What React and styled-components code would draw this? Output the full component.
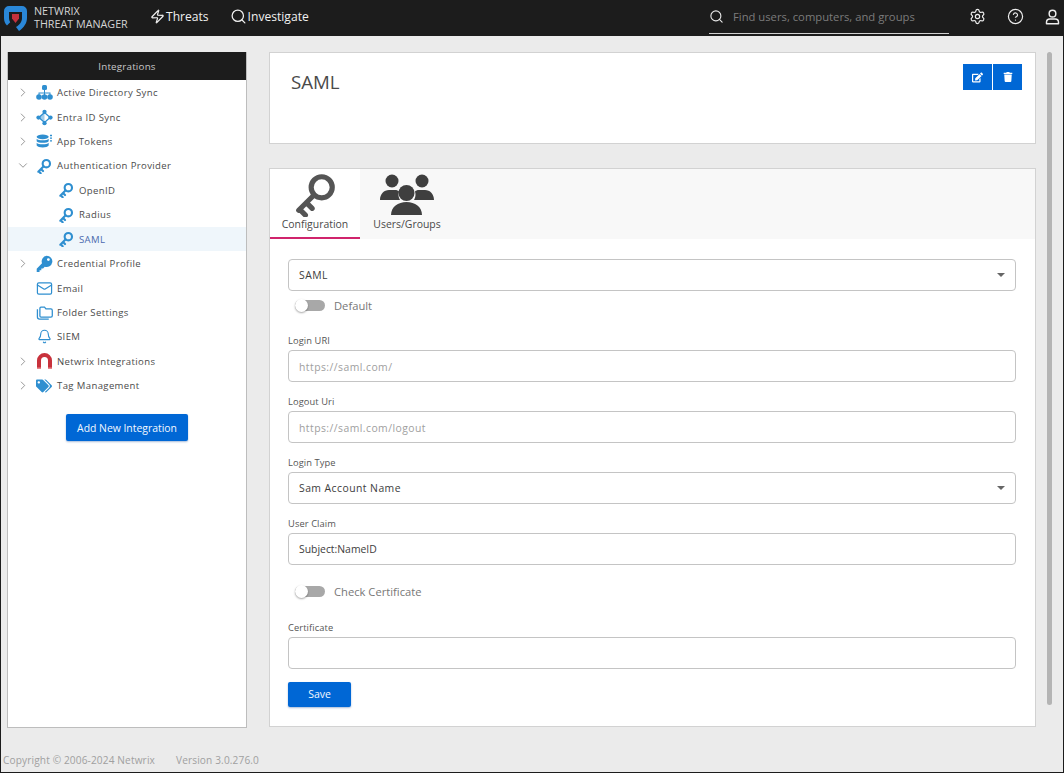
import styled, { createGlobalStyle } from 'styled-components';
import { Zap, Search, Settings, CircleHelp, Mail, Bell, ChevronRight, ChevronDown } from 'lucide-react';
import { FaTags, FaEdit, FaTrash } from 'react-icons/fa';

const GlobalStyle = createGlobalStyle`
  * { box-sizing: border-box; }
  body {
    margin: 0;
    background: #ebebeb;
    font-family: "Open Sans", "Liberation Sans", sans-serif;
  }
`;

const Page = styled.div`
  width: 1064px;
  height: 773px;
  display: flex;
  flex-direction: column;
  border: 1px solid #1c1c1c;
  border-top: 0;
  overflow: hidden;
`;

const Header = styled.header`
  height: 36px;
  flex: none;
  background: #1c1c1c;
  color: #f0f0f0;
  display: flex;
  align-items: center;
  padding: 0 0 3px 3px;
`;

const Brand = styled.div`
  display: flex;
  align-items: center;
  gap: 7px;
  width: 146px;
  font-size: 10.75px;
  line-height: 13.5px;
  color: #d4d4d4;
  margin-top: 3px;
`;

const NavItem = styled.div`
  display: flex;
  align-items: center;
  gap: 1px;
  font-size: 12.1px;
  margin-right: ${p => p.$gap}px;
`;

const SearchBox = styled.div`
  margin-left: auto;
  width: 240px;
  height: 26px;
  margin-top: 9px;
  display: flex;
  align-items: center;
  gap: 9px;
  padding-bottom: 9px;
  border-bottom: 1px solid #d0d0d0;
  color: #e8e8e8;
`;

const SearchText = styled.span`
  font-size: 11.25px;
  color: #7b7b7b;
`;

const HeaderIcons = styled.div`
  display: flex;
  align-items: center;
  gap: 21px;
  margin-left: 20px;
  margin-right: 3px;
  color: #ededed;
`;

const Body = styled.div`
  flex: 1;
  min-height: 0;
  display: flex;
  align-items: flex-start;
  padding: 16px 0 0 6px;
`;

const Sidebar = styled.aside`
  width: 240px;
  height: 676px;
  flex: none;
  background: #fff;
  border: 1px solid #bdbdbd;
  border-top: 0;
  margin-right: 22px;
`;

const SidebarTitle = styled.div`
  height: 28px;
  background: #1c1c1c;
  color: #c9c9c9;
  font-size: 9.8px;
  letter-spacing: 0.2px;
  display: flex;
  align-items: center;
  justify-content: center;
`;

const TreeList = styled.div`
  padding-top: 0.4px;
`;

const TreeRow = styled.div`
  height: 24.45px;
  display: flex;
  align-items: center;
  padding-left: ${p => (p.$child ? 49 : 8)}px;
  background: ${p => (p.$active ? '#eff6fb' : 'transparent')};
  color: ${p => (p.$active ? '#4a69ad' : '#4b4b4b')};
  font-size: 9.55px;
  letter-spacing: 0.38px;
`;

const Caret = styled.span`
  width: 14px;
  height: 16px;
  margin-right: 5px;
  display: flex;
  align-items: center;
  justify-content: center;
  color: #777;
  flex: none;
`;

const TreeIcon = styled.span`
  width: 18px;
  height: 18px;
  margin-right: 4px;
  flex: none;
  display: flex;
  align-items: center;
  justify-content: center;
  color: ${p => p.$color || '#2f8fd0'};
`;

const AddWrap = styled.div`
  display: flex;
  justify-content: center;
  padding-top: 16px;
`;

const PrimaryButton = styled.button`
  border: 0;
  border-radius: 2px;
  background: #0067d5;
  color: #f4f8ff;
  font-family: inherit;
  font-size: ${p => p.$size || 10.4}px;
  height: ${p => p.$h}px;
  width: ${p => p.$w}px;
  padding: 0;
  box-shadow: 0 1px 2px rgba(0, 60, 140, 0.35);
`;

const Main = styled.main`
  width: 767px;
  flex: none;
  display: flex;
  flex-direction: column;
  gap: 24px;
`;

const TitleCard = styled.section`
  height: 92px;
  background: #fff;
  border: 1px solid #d2d2d2;
  display: flex;
  justify-content: space-between;
  padding: 11px 13px 0 21px;
`;

const PageTitle = styled.h1`
  margin: 5px 0 0;
  font-size: 18.7px;
  font-weight: 400;
  color: #4a4a4a;
`;

const ActionGroup = styled.div`
  display: flex;
  gap: 1px;
  height: 26px;
`;

const ActionButton = styled.button`
  width: 29px;
  height: 26px;
  border: 0;
  padding: 0;
  background: #0067d5;
  color: #fff;
  display: flex;
  align-items: center;
  justify-content: center;
`;

const FormCard = styled.section`
  height: 559px;
  background: #fff;
  border: 1px solid #d2d2d2;
`;

const TabBar = styled.div`
  height: 70px;
  display: flex;
  background: #f8f8f8;
`;

const Tab = styled.div`
  width: ${p => p.$w}px;
  height: 70px;
  display: flex;
  flex-direction: column;
  align-items: center;
  justify-content: flex-end;
  padding-bottom: ${p => (p.$active ? 6 : 8)}px;
  background: ${p => (p.$active ? '#fff' : 'transparent')};
  border-bottom: ${p => (p.$active ? '2px solid #d0246c' : '0')};
  color: #4a4a4a;
  font-size: 10.45px;
`;

const TabIcon = styled.span`
  display: flex;
  margin-bottom: ${p => p.$gap}px;
  color: #555;
`;

const Form = styled.div`
  padding: 20px 19px 0 18px;
  display: flex;
  flex-direction: column;
`;

const FieldLabel = styled.label`
  display: block;
  font-size: 9.3px;
  letter-spacing: 0.1px;
  line-height: 12px;
  color: #555;
  margin-top: ${p => p.$top}px;
  margin-bottom: 3px;
`;

const Control = styled.div`
  height: 32px;
  border: 1px solid #c4c4c4;
  border-radius: 4px;
  background: #fff;
  display: flex;
  align-items: center;
  justify-content: space-between;
  padding: ${p => (p.$placeholder ? '1px' : '0')} 10px 0;
  font-size: 10.4px;
  letter-spacing: ${p => (p.$tight ? 0 : 0.45)}px;
  color: ${p => (p.$placeholder ? '#a0a0a0' : '#3d3d3d')};
`;

const SelectArrow = styled.span`
  width: 0;
  height: 0;
  border-left: 4px solid transparent;
  border-right: 4px solid transparent;
  border-top: 4px solid #666;
`;

const ToggleRow = styled.div`
  display: flex;
  align-items: center;
  height: 20px;
  margin-top: ${p => p.$top}px;
  padding-left: 7px;
  font-size: 11.2px;
  color: #777;
`;

const Toggle = styled.span`
  position: relative;
  width: 30px;
  height: 11px;
  border-radius: 6px;
  margin-right: 9px;
  background: #a8a8a8;
  &::after {
    content: '';
    position: absolute;
    left: 0;
    top: -1px;
    width: 13px;
    height: 13px;
    border-radius: 50%;
    background: #fff;
    box-shadow: 0 1px 2px rgba(0, 0, 0, 0.35);
  }
`;

const SaveWrap = styled.div`
  margin-top: 12px;
`;

const Scrollbar = styled.div`
  width: 5px;
  height: 653px;
  flex: none;
  margin-left: 11px;
  border-radius: 3px;
  background: #b4b4b4;
`;

const Footer = styled.footer`
  height: 36px;
  flex: none;
  display: flex;
  gap: 21px;
  align-items: flex-start;
  padding: 17px 0 0 2px;
  font-size: 10.1px;
  letter-spacing: 0.14px;
  color: #a0a0a0;
`;

const Logo = () => (
  <svg width="23" height="25" viewBox="0 0 23 25">
    <path d="M5 0h13a5 5 0 0 1 5 5v7c0 5-3 9.500-8 13l-3-4c3.500-2 6-5 6-9V6H5v6c0 1.500.4 3 1.200 4.300L3 19.500C1 17.500 0 15 0 12V5a5 5 0 0 1 5-5z" fill="#2a87d8" />
    <path d="M8 8h7v4.500l-3.500 4.500L8 12.500z" fill="#c4313d" />
  </svg>
);

const KeyIcon = ({ size = 16, weight = 3.2 }) => (
  <svg width={size} height={size} viewBox="0 0 24 24" fill="none" stroke="currentColor" strokeWidth={weight}>
    <circle cx="15.5" cy="8.500" r="5.500" />
    <path d="M11.500 12.500L3.500 20.500M4 20l3 3M7.500 16.500l3 3" strokeLinecap="round" />
  </svg>
);

const SolidKey = () => (
  <svg width="17" height="17" viewBox="0 0 24 24" fill="currentColor">
    <path d="M15 1a8 8 0 1 1-2.700 15.500L10 19H7.500v2.500H5V24H1v-4.500l7.500-7.800A8 8 0 0 1 15 1zm2.500 3.500a2 2 0 1 0 0 4 2 2 0 0 0 0-4z" />
  </svg>
);

const SitemapIcon = () => (
  <svg width="17" height="15" viewBox="0 0 17 15" fill="currentColor">
    <rect x="6" y="0" width="5" height="5" rx="1.500" />
    <path d="M8 5h1v2.500h5.500V10h-1V8.500H9V10H8V8.500H3.500V10h-1V7.500H8z" />
    <circle cx="3" cy="12" r="2.800" />
    <circle cx="8.500" cy="12" r="2.800" />
    <circle cx="14" cy="12" r="2.800" />
  </svg>
);

const DbIcon = () => (
  <svg width="16" height="15" viewBox="0 0 24 22" fill="currentColor">
    <ellipse cx="10" cy="4" rx="9" ry="3.500" />
    <path d="M1 7c2 3 16 3 18 0v3.500c-2 3-16 3-18 0zM1 13c2 3 16 3 18 0v4c-2 4-16 4-18 0z" />
    <path d="M21 2h3M21 6h3M21 10h3" stroke="currentColor" strokeWidth="2" />
  </svg>
);

const EntraIcon = () => (
  <svg width="17" height="17" viewBox="0 0 24 24" fill="none" stroke="currentColor" strokeWidth="1.800">
    <path d="M12 5L4 12l8 7 8-7z" />
    <path d="M12 5L4 12l8 7z" fill="currentColor" opacity="0.45" stroke="none" />
    <circle cx="12" cy="4" r="3" fill="currentColor" stroke="none" />
    <circle cx="12" cy="20" r="3" fill="currentColor" stroke="none" />
    <circle cx="3.500" cy="12" r="3" fill="currentColor" stroke="none" />
    <circle cx="20.500" cy="12" r="3" fill="currentColor" stroke="none" />
  </svg>
);

const FoldersIcon = () => (
  <svg width="17" height="15" viewBox="0 0 24 21" fill="none" stroke="currentColor" strokeWidth="1.800">
    <path d="M7 3h5l2 2.500h7a2 2 0 0 1 2 2V15a2 2 0 0 1-2 2H7a1.500 1.500 0 0 1-1.500-1.500V4.500A1.500 1.500 0 0 1 7 3z" />
    <path d="M2 6v11a3 3 0 0 0 3 3h13" />
  </svg>
);

const MagnetIcon = () => (
  <svg width="15" height="16" viewBox="0 0 15 16">
    <path d="M0 16V7.500a7.500 7.500 0 0 1 15 0V16h-4V7.500a3.500 3.500 0 0 0-7 0V16z" fill="#c8323c" />
    <path d="M0 16v-1.500h4V16zM11 16v-1.500h4V16z" fill="#e8848a" />
  </svg>
);

const UserIcon = () => (
  <svg width="15" height="16" viewBox="0 0 22 24" fill="none" stroke="currentColor" strokeWidth="2.200">
    <circle cx="11" cy="7" r="5" />
    <path d="M2 22v-2a5 5 0 0 1 5-5h8a5 5 0 0 1 5 5v2z" strokeLinejoin="round" />
  </svg>
);

const UsersLarge = () => (
  <svg width="54" height="42" viewBox="0 0 54 42" fill="#3f3f3f">
    <circle cx="12" cy="7" r="6.500" />
    <circle cx="42" cy="7" r="6.500" />
    <path d="M0 26c0-6 4-10 9-10h6c2 0 3 .5 4 1.500-1 3-.5 6 1 8.500z" />
    <path d="M54 26c0-6-4-10-9-10h-6c-2 0-3 .5-4 1.500 1 3 .5 6-1 8.500z" />
    <circle cx="26.500" cy="19" r="8" />
    <path d="M11 41c0-8 7-13 15.500-13S42 33 42 41z" />
  </svg>
);

const treeItems = [
  { label: 'Active Directory Sync', caret: 'right', icon: <SitemapIcon /> },
  { label: 'Entra ID Sync', caret: 'right', icon: <EntraIcon /> },
  { label: 'App Tokens', caret: 'right', icon: <DbIcon /> },
  { label: 'Authentication Provider', caret: 'down', icon: <KeyIcon /> },
  { label: 'OpenID', child: true, icon: <KeyIcon /> },
  { label: 'Radius', child: true, icon: <KeyIcon /> },
  { label: 'SAML', child: true, active: true, icon: <KeyIcon /> },
  { label: 'Credential Profile', caret: 'right', icon: <SolidKey /> },
  { label: 'Email', caret: 'none', icon: <Mail size={17} strokeWidth={1.7} /> },
  { label: 'Folder Settings', caret: 'none', icon: <FoldersIcon /> },
  { label: 'SIEM', caret: 'none', icon: <Bell size={15} strokeWidth={1.8} /> },
  { label: 'Netwrix Integrations', caret: 'right', icon: <MagnetIcon /> },
  { label: 'Tag Management', caret: 'right', icon: <FaTags size={16} /> },
];

const TreeItem = ({ item }) => (
  <TreeRow $child={item.child} $active={item.active}>
    {item.caret && (
      <Caret>
        {item.caret === 'right' && <ChevronRight size={15} strokeWidth={1.3} />}
        {item.caret === 'down' && <ChevronDown size={15} strokeWidth={1.3} />}
      </Caret>
    )}
    <TreeIcon>{item.icon}</TreeIcon>
    {item.label}
  </TreeRow>
);

const App = () => (
  <Page>
    <GlobalStyle />
    <Header>
      <Brand>
        <Logo />
        <div>NETWRIX<br />THREAT MANAGER</div>
      </Brand>
      <NavItem $gap={21}>
        <Zap size={15} strokeWidth={2} />
        Threats
      </NavItem>
      <NavItem $gap={0}>
        <Search size={17} strokeWidth={1.8} />
        Investigate
      </NavItem>
      <SearchBox>
        <Search size={15} strokeWidth={1.8} />
        <SearchText>Find users, computers, and groups</SearchText>
      </SearchBox>
      <HeaderIcons>
        <Settings size={17} strokeWidth={1.7} />
        <CircleHelp size={17} strokeWidth={1.7} />
        <UserIcon />
      </HeaderIcons>
    </Header>
    <Body>
      <Sidebar>
        <SidebarTitle>Integrations</SidebarTitle>
        <TreeList>
          {treeItems.map(item => <TreeItem key={item.label} item={item} />)}
        </TreeList>
        <AddWrap>
          <PrimaryButton $w={122} $h={27}>Add New Integration</PrimaryButton>
        </AddWrap>
      </Sidebar>
      <Main>
        <TitleCard>
          <PageTitle>SAML</PageTitle>
          <ActionGroup>
            <ActionButton><FaEdit size={11} /></ActionButton>
            <ActionButton><FaTrash size={10} /></ActionButton>
          </ActionGroup>
        </TitleCard>
        <FormCard>
          <TabBar>
            <Tab $w={90} $active>
              <TabIcon $gap={0}><KeyIcon size={46} weight={2.7} /></TabIcon>
              Configuration
            </Tab>
            <Tab $w={94}>
              <TabIcon $gap={1}><UsersLarge /></TabIcon>
              Users/Groups
            </Tab>
          </TabBar>
          <Form>
            <Control>SAML<SelectArrow /></Control>
            <ToggleRow $top={4}><Toggle />Default</ToggleRow>
            <FieldLabel $top={20}>Login URI</FieldLabel>
            <Control $placeholder>https://saml.com/</Control>
            <FieldLabel $top={14}>Logout Uri</FieldLabel>
            <Control $placeholder>https://saml.com/logout</Control>
            <FieldLabel $top={14}>Login Type</FieldLabel>
            <Control>Sam Account Name<SelectArrow /></Control>
            <FieldLabel $top={14}>User Claim</FieldLabel>
            <Control $tight>Subject:NameID</Control>
            <ToggleRow $top={16}><Toggle />Check Certificate</ToggleRow>
            <FieldLabel $top={21}>Certificate</FieldLabel>
            <Control />
            <SaveWrap>
              <PrimaryButton $w={63} $h={25} $size={10.5}>Save</PrimaryButton>
            </SaveWrap>
          </Form>
        </FormCard>
      </Main>
      <Scrollbar />
    </Body>
    <Footer>
      <span>Copyright © 2006-2024 Netwrix</span>
      <span>Version 3.0.276.0</span>
    </Footer>
  </Page>
);

export default App;
